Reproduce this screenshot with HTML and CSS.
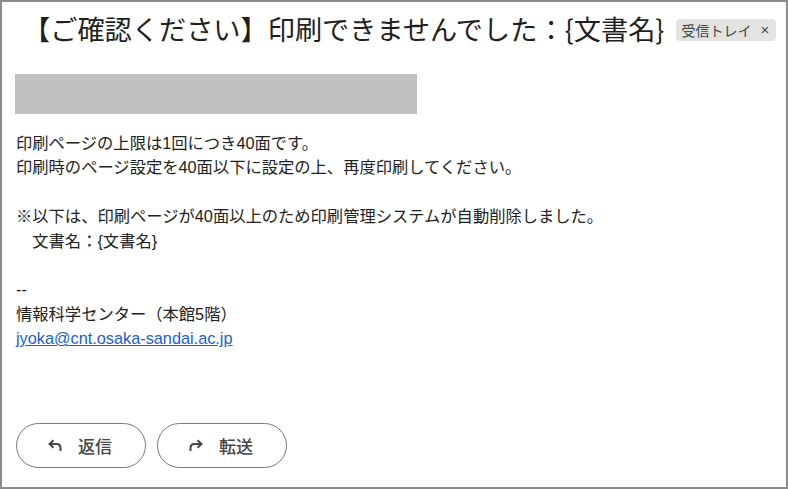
FILE: index.html
```html
<!DOCTYPE html>
<html lang="ja">
<head>
<meta charset="utf-8">
<title>Mail</title>
<link rel="stylesheet" href="styles.css">
</head>
<body>
<div class="mail">
  <div class="header">
    <h1 class="subject">【ご確認ください】印刷できませんでした：{文書名}</h1>
    <span class="badge">受信トレイ<span class="badge-x">×</span></span>
  </div>
  <div class="sender-bar"></div>
  <div class="body">
    <p>印刷ページの上限は1回につき40面です。</p>
    <p>印刷時のページ設定を40面以下に設定の上、再度印刷してください。</p>
    <p class="blank">&nbsp;</p>
    <p>※以下は、印刷ページが40面以上のため印刷管理システムが自動削除しました。</p>
    <p>　文書名：{文書名}</p>
    <p class="blank">&nbsp;</p>
    <p>--</p>
    <p>情報科学センター（本館5階）</p>
    <p><a class="link" href="#">jyoka@cnt.osaka-sandai.ac.jp</a></p>
  </div>
  <div class="actions">
    <button class="action">
      <svg class="icon" viewBox="0 0 14 12" width="14" height="12" aria-hidden="true">
        <path d="M5.5 1.2 L1.5 5 L5.5 8.8" fill="none" stroke="currentColor" stroke-width="2" stroke-linejoin="miter"/>
        <path d="M1.8 5 H8.5 Q12.5 5 12.5 9 V12" fill="none" stroke="currentColor" stroke-width="2"/>
      </svg>
      <span>返信</span>
    </button>
    <button class="action">
      <svg class="icon" viewBox="0 0 14 12" width="14" height="12" aria-hidden="true">
        <path d="M8.5 1.2 L12.5 5 L8.5 8.8" fill="none" stroke="currentColor" stroke-width="2" stroke-linejoin="miter"/>
        <path d="M12.2 5 H5.5 Q1.5 5 1.5 9 V12" fill="none" stroke="currentColor" stroke-width="2"/>
      </svg>
      <span>転送</span>
    </button>
  </div>
</div>
</body>
</html>
```
FILE: styles.css
```css
html, body {
  margin: 0;
  padding: 0;
  background: #ffffff;
}

.mail {
  box-sizing: border-box;
  width: 788px;
  height: 489px;
  border: 2px solid #8a8a8a;
  padding: 8px 0 0 13px;
  font-family: "Liberation Sans", "Noto Sans CJK JP", sans-serif;
  color: #222222;
}

.header {
  display: flex;
  align-items: center;
  height: 36px;
}

.subject {
  margin: 0 0 0 8px;
  font-family: "Noto Sans CJK JP", sans-serif;
  font-size: 27.2px;
  font-weight: 400;
  line-height: 36px;
  color: #1f1f1f;
  white-space: nowrap;
}

.badge {
  flex: none;
  display: inline-flex;
  align-items: center;
  height: 22px;
  margin: 4px 0 0 11px;
  padding: 0 7px 0 6px;
  border-radius: 4px;
  background: #e2e3e2;
  color: #444746;
  font-family: "Noto Sans CJK JP", sans-serif;
  font-size: 14px;
  line-height: 22px;
  white-space: nowrap;
}

.badge-x {
  margin-left: 9px;
  font-family: "Liberation Sans", sans-serif;
  font-size: 15px;
}

.sender-bar {
  width: 402px;
  height: 40px;
  margin-top: 28px;
  background: #c1c1c1;
}

.body {
  margin: 17px 0 0 1px;
  font-size: 16.3px;
  line-height: 24.4px;
  color: #222222;
}

.body p {
  margin: 0;
  white-space: nowrap;
}

.link {
  color: #1a5fd0;
  text-decoration: underline;
}

.actions {
  display: flex;
  gap: 11px;
  margin: 72px 0 0 1px;
}

.action {
  box-sizing: border-box;
  display: flex;
  align-items: center;
  width: 130px;
  height: 45px;
  padding: 0 0 0 31px;
  border: 1px solid #7a7a7a;
  border-radius: 23px;
  background: #ffffff;
  color: #444746;
  font-family: "Noto Sans CJK JP", sans-serif;
  font-size: 17px;
  font-weight: 500;
  cursor: pointer;
}

.icon {
  flex: none;
  margin-right: 16px;
}
```
